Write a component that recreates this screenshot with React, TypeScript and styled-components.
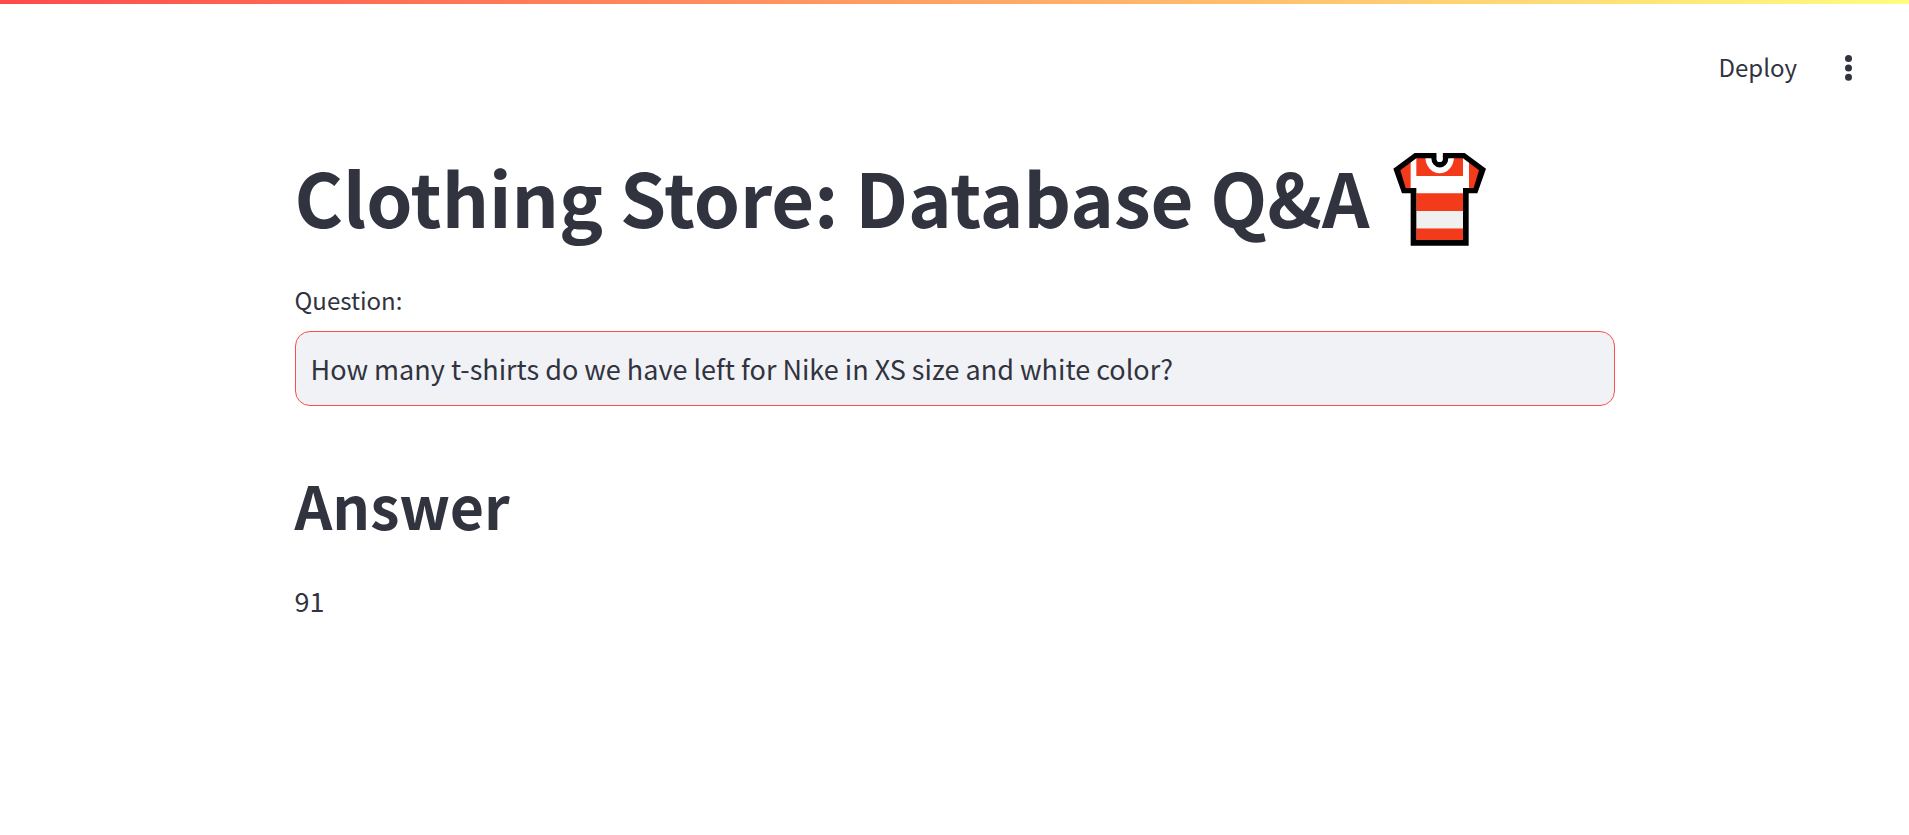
import { useState } from "react";
import styled, { createGlobalStyle } from "styled-components";

const ink = "#31333f";

const GlobalStyle = createGlobalStyle`
  *, *::before, *::after { box-sizing: border-box; }
  body {
    margin: 0;
    background: #ffffff;
    color: ${ink};
    font-family: "Source Sans Pro", "Noto Sans CJK JP", sans-serif;
    font-size: 27px;
  }
`;

const Decoration = styled.div`
  height: 4px;
  background: linear-gradient(90deg, #ff4b4b, #fffd80);
`;

const Toolbar = styled.header`
  display: flex;
  align-items: center;
  justify-content: flex-end;
  gap: 38px;
  height: 128px;
  padding: 0 46px;
`;

const ToolbarButton = styled.button`
  display: flex;
  align-items: center;
  padding: 0;
  border: 0;
  background: transparent;
  color: inherit;
  font: inherit;
  font-size: 24px;
  line-height: 40px;
  cursor: pointer;
`;

const DeployButton = styled(ToolbarButton)`
  padding-bottom: 2px;
`;

const Main = styled.main`
  max-width: 1380px;
  margin: 0 auto;
  padding: 14px 30px 60px;
`;

const Title = styled.h1`
  display: flex;
  align-items: flex-end;
  flex-wrap: wrap;
  gap: 23px;
  margin: 0 0 33px;
  font-size: 74px;
  font-weight: 700;
  line-height: 100px;
`;

const Label = styled.label`
  display: block;
  margin-bottom: 10px;
  font-size: 24px;
  line-height: 42px;
`;

const TextInput = styled.input`
  display: block;
  width: 100%;
  height: 75px;
  padding: 0 15px;
  border: 1px solid #ff4b4b;
  border-radius: 15px;
  outline: none;
  background: #f0f2f6;
  color: inherit;
  font: inherit;
`;

const Subheading = styled.h2`
  margin: 59px 0 32px;
  font-size: 59px;
  font-weight: 600;
  line-height: 80px;
`;

const Answer = styled.p`
  margin: 0;
  line-height: 48px;
`;

function ShirtIcon() {
  return (
    <svg width="94" height="94" viewBox="39 35 282 282" role="img" aria-label="T-shirt">
      <path d="M109 47H249L308 84L286 150H257V307H100V150H72L49 84Z" fill="#fff" />
      <path d="M109 46H249V107H109Z" fill="#f33a1a" />
      <path d="M92 60V143H72L58 90ZM267 60V143H286L300 90Z" fill="#f33a1a" />
      <path d="M109 159H249V212H109ZM109 264H249V300H109Z" fill="#f33a1a" />
      <path d="M109 212H249V264H109Z" fill="#f0f0f0" />
      <path d="M136 50A43 49 0 0 0 222 50Z" fill="#fff" />
      <path
        d="M170 38H104L40 85L66 159H92V316H266V159H292L318 85L254 38H188V56A9 9 0 0 1 170 56ZM154 54A25 27 0 0 0 205 54H249L297 90L281 143H249V299H109V143H77L61 90L109 54Z"
        fill="#000"
        fillRule="evenodd"
      />
      <path d="M170 36H188V56A9 9 0 0 1 170 56Z" fill="#fff" />
    </svg>
  );
}

function MenuIcon() {
  return (
    <svg width="28" height="28" viewBox="0 0 28 28" fill="currentColor" aria-hidden="true">
      <circle cx="13.5" cy="4.5" r="3.5" />
      <circle cx="13.5" cy="14" r="3.5" />
      <circle cx="13.5" cy="23.3" r="3.5" />
    </svg>
  );
}

export default function App() {
  const [question, setQuestion] = useState(
    "How many t-shirts do we have left for Nike in XS size and white color?"
  );

  return (
    <>
      <GlobalStyle />
      <Decoration />
      <Toolbar>
        <DeployButton type="button">Deploy</DeployButton>
        <ToolbarButton type="button" aria-label="Main menu">
          <MenuIcon />
        </ToolbarButton>
      </Toolbar>
      <Main>
        <Title>
          Clothing Store: Database Q&amp;A
          <ShirtIcon />
        </Title>
        <Label htmlFor="question">Question:</Label>
        <TextInput
          id="question"
          type="text"
          value={question}
          onChange={(event) => setQuestion(event.target.value)}
        />
        <Subheading>Answer</Subheading>
        <Answer>91</Answer>
      </Main>
    </>
  );
}
